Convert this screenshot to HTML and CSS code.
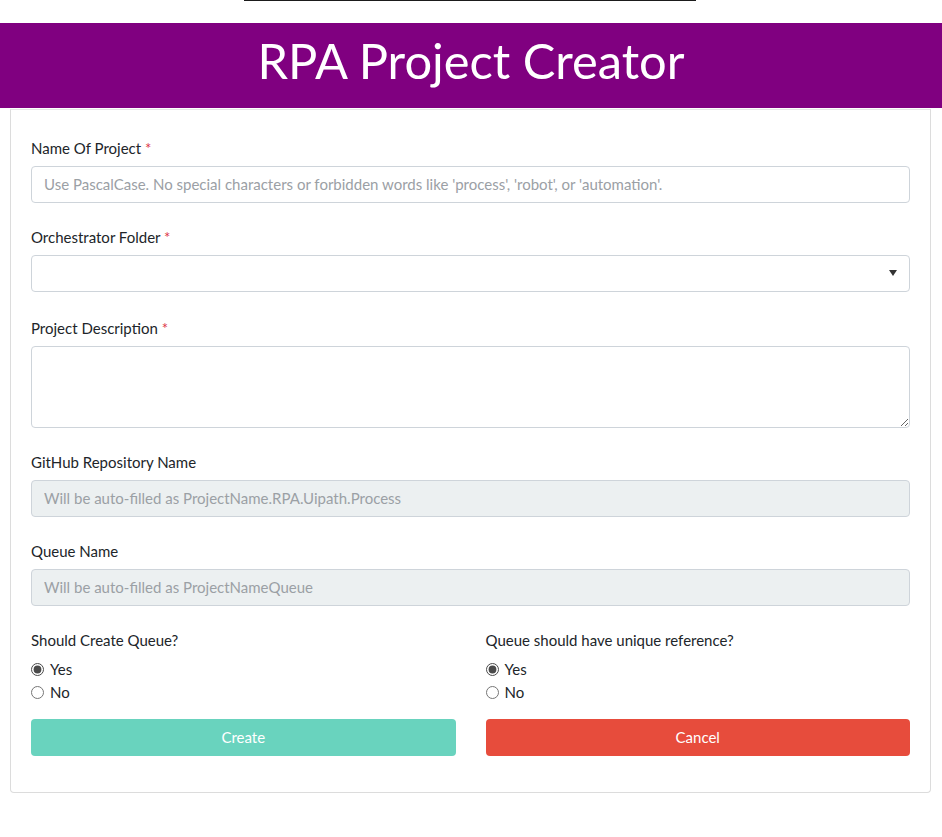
FILE: index.html
```html
<!DOCTYPE html>
<html lang="en">
<head>
<meta charset="utf-8">
<title>RPA Project Creator</title>
<link rel="stylesheet" href="styles.css">
</head>
<body>
<div class="top-rule"></div>
<header class="banner">
  <h1 class="banner-title">RPA Project Creator</h1>
</header>
<main class="card">
  <form class="form">
    <div class="group">
      <label class="label" for="name">Name Of Project <span class="req">*</span></label>
      <input class="control" id="name" type="text" placeholder="Use PascalCase. No special characters or forbidden words like 'process', 'robot', or 'automation'.">
    </div>
    <div class="group group-select">
      <label class="label" for="folder">Orchestrator Folder <span class="req">*</span></label>
      <div class="select-wrap">
        <select class="control select" id="folder"><option></option></select>
      </div>
    </div>
    <div class="group">
      <label class="label" for="desc">Project Description <span class="req">*</span></label>
      <textarea class="control area" id="desc"></textarea>
    </div>
    <div class="group">
      <label class="label" for="repo">GitHub Repository Name</label>
      <input class="control" id="repo" type="text" disabled placeholder="Will be auto-filled as ProjectName.RPA.Uipath.Process">
    </div>
    <div class="group">
      <label class="label" for="queue">Queue Name</label>
      <input class="control" id="queue" type="text" disabled placeholder="Will be auto-filled as ProjectNameQueue">
    </div>
    <div class="cols">
      <div class="col">
        <div class="label">Should Create Queue?</div>
        <label class="radio"><input type="radio" name="create" checked> Yes</label>
        <label class="radio"><input type="radio" name="create"> No</label>
        <button type="button" class="btn btn-create">Create</button>
      </div>
      <div class="col">
        <div class="label">Queue should have unique reference?</div>
        <label class="radio"><input type="radio" name="unique" checked> Yes</label>
        <label class="radio"><input type="radio" name="unique"> No</label>
        <button type="button" class="btn btn-cancel">Cancel</button>
      </div>
    </div>
  </form>
</main>
</body>
</html>
```
FILE: styles.css
```css
* { box-sizing: border-box; }
html, body { margin: 0; padding: 0; background: #fff; }
body {
  font-family: Lato, "Open Sans", "Liberation Sans", sans-serif;
  font-size: 15px;
  line-height: 1.5;
  color: #212529;
}
.top-rule {
  width: 452px;
  height: 1px;
  margin: 0 0 22px 244px;
  background: #1b1b1b;
}
.banner {
  background: #800080;
  height: 85px;
  padding-top: 8px;
  text-align: center;
}
.banner-title {
  margin: 0;
  font-weight: 400;
  font-size: 48.8px;
  line-height: 1.2;
  color: #fff;
}
.card {
  margin: 1px 0 0 10px;
  width: 921px;
  border: 1px solid #dcdcdc;
  border-top-color: #e6e6e6;
  border-radius: 0 0 4px 4px;
  padding: 27px 20px 36px 20px;
}
.form { margin: 0; }
.group { margin-bottom: 23px; }
.group-select { margin-bottom: 25px; }
.label {
  display: block;
  height: 22px;
  line-height: 22px;
  margin-bottom: 7px;
}
.req { color: #dc3545; }
.control {
  display: block;
  width: 100%;
  height: 37px;
  margin: 0;
  padding: 5px 12px 7px;
  font-family: inherit;
  font-size: 15px;
  color: #212529;
  background: #fff;
  border: 1px solid #ced4da;
  border-radius: 4px;
  outline: none;
}
.control::placeholder { color: #9ba0a5; opacity: 1; }
.control:disabled { background: #ecf0f1; }
.area { height: 82px; resize: vertical; }
.select-wrap { position: relative; }
.select { appearance: none; -webkit-appearance: none; }
.select-wrap::after {
  content: "";
  position: absolute;
  right: 13px;
  top: 15px;
  border-left: 4.5px solid transparent;
  border-right: 4.5px solid transparent;
  border-top: 6px solid #333;
  pointer-events: none;
}
.cols {
  display: grid;
  grid-template-columns: 1fr 1fr;
  column-gap: 30px;
}
.col { display: flex; flex-direction: column; }
.col .label { margin-bottom: 7px; }
.radio {
  display: flex;
  align-items: center;
  height: 23px;
  line-height: 23px;
}
.radio input {
  width: 13px;
  height: 13px;
  margin: 0 6px 0 0;
  accent-color: #4a4a4a;
}
.btn {
  margin-top: 15px;
  height: 37px;
  width: 100%;
  border: 0;
  border-radius: 4px;
  font-family: inherit;
  font-size: 15px;
  line-height: 37px;
  padding: 0 0 1px;
  color: #fff;
  cursor: pointer;
}
.btn-create { background: #69d3be; }
.btn-cancel { background: #e74c3c; }
```
